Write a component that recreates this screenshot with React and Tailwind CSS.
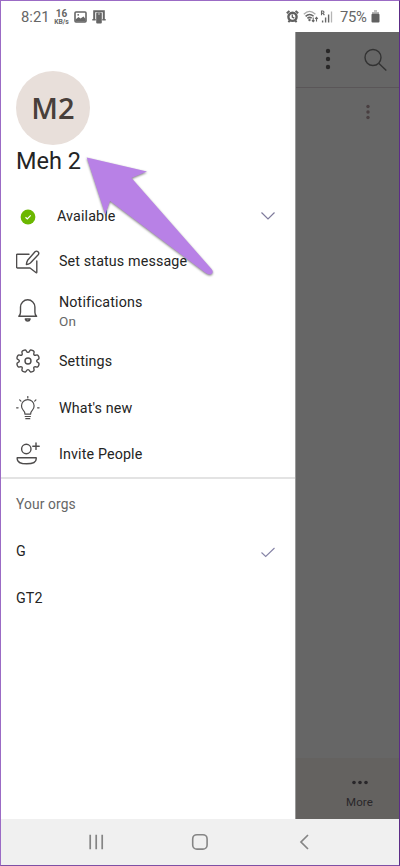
import React from "react";

// ---------- status bar icons ----------
const StatusBar = () => (
  <div className="flex h-[31px] shrink-0 items-center pl-5 pr-[19px] text-[#666]">
    <span className="w-[27px] text-[14.8px] leading-none mt-[2px]">8:21</span>
    <div className="ml-[5px] flex w-[17px] flex-col items-center">
      <span className="text-[10px] leading-[10px] font-bold">16</span>
      <span className="text-[6.8px] leading-[6px] font-bold">KB/s</span>
    </div>
    <svg className="ml-[4px]" width="13" height="12" viewBox="0 0 13 12">
      <rect x="1" y="1" width="11" height="10" rx="1" fill="none" stroke="#666" strokeWidth="1.6" />
      <path d="M1.500 10.500V8.500l3-2.500 2 1.600L9.500 5.500l2 2.500v2.500z" fill="#666" />
      <circle cx="4.200" cy="3.800" r="0.9" fill="#666" />
    </svg>
    <svg className="ml-[5px] mt-[1px]" width="14" height="14" viewBox="0 0 14 14">
      <path d="M2.200 9.500V1.200h9.600v8.300" fill="none" stroke="#666" strokeWidth="2" />
      <path d="M0.300 9.800h3.400M10.300 9.800h3.400" stroke="#666" strokeWidth="1.400" />
      <rect x="4.200" y="2.600" width="5.600" height="11" rx="1" fill="#666" />
      <path d="M6 4h2" stroke="#ddd" strokeWidth="0.800" />
    </svg>

    {/* right side */}
    <svg className="ml-auto" width="13" height="13" viewBox="0 0 13 13">
      <circle cx="6.500" cy="6.800" r="4.100" fill="none" stroke="#606060" strokeWidth="2.400" />
      <path d="M0.800 3.200L3.400 0.900M12.200 3.200L9.600 0.900M2.400 12.200l1.500-1.900M10.600 12.200l-1.500-1.900" stroke="#606060" strokeWidth="1.900" />
      <path d="M6.300 4.400v2.800l2 1" fill="none" stroke="#606060" strokeWidth="1.300" />
    </svg>
    <svg className="ml-[4px]" width="16" height="13" viewBox="0 0 16 13">
      <path d="M0.800 4.200Q6.500-1.400 12.400 4.200" fill="none" stroke="#aaa" strokeWidth="1.200" />
      <path d="M2.600 6.400Q6.500 2.600 10.600 6.200M4.400 8.400Q6.500 6.400 8.700 8.200" fill="none" stroke="#666" strokeWidth="1.500" />
      <circle cx="6.500" cy="10" r="1.200" fill="#666" />
      <path d="M10.200 7.600v4M8.900 10.300l1.300 1.400 1.300-1.400M13.500 11.500v-4M12.200 8.800l1.300-1.400 1.300 1.400" fill="none" stroke="#666" strokeWidth="1.100" />
    </svg>
    <svg className="ml-[1px]" width="13" height="13" viewBox="0 0 13 13">
      <path d="M1.500 5.200V1h1.300a1 1 0 0 1 0 2.300H1.500M3 3.300l1.400 1.900" fill="none" stroke="#666" strokeWidth="1.100" />
      <path d="M2.600 12.500v-1.900M5.600 12.500V7.600M8.600 12.500V4.600" stroke="#666" strokeWidth="1.400" />
      <path d="M11.500 12.500V1.500" stroke="#b5b5b5" strokeWidth="1.300" />
    </svg>
    <span className="ml-[7px] mt-[2px] w-[28px] text-[14.800px] leading-none tracking-[-0.300px]">75%</span>
    <svg className="ml-[3px]" width="9" height="13" viewBox="0 0 9 13">
      <path d="M3 1h3" stroke="#b5b5b5" strokeWidth="1.600" />
      <path d="M1 2h7v3H1z" fill="#b5b5b5" />
      <rect x="0.500" y="3.800" width="8" height="8.700" rx="1" fill="#606060" />
    </svg>
  </div>
);

// ---------- drawer icons ----------
const iconProps = {
  width: 24,
  height: 24,
  viewBox: "0 0 24 24",
  fill: "none",
  stroke: "#4e4c4c",
  strokeWidth: 1.4,
  strokeLinecap: "round",
  strokeLinejoin: "round",
};

const StatusIcon = () => (
  <svg {...iconProps}>
    <path d="M13 4.200H1.400q-.8 0-.8.800v12.200q0 .8.8.8H14l6.200 4.700q.6.300.6-.6V11" />
    <path d="M19 1.800a2.200 2.200 0 0 1 3.200 3L14.400 13q-2 1.500-4 1.500 0-2.200 1.200-4.200z" />
  </svg>
);

const BellIcon = () => (
  <svg {...iconProps} className="-mt-[3px]">
    <path d="M2.800 18.300q1.700-1.400 1.700-4V9a7.200 7.200 0 0 1 14.400 0v5.300q0 2.600 1.700 4z" />
    <path d="M9.300 21q.5 2 2.400 2t2.400-2z" />
  </svg>
);

// eight-toothed outline, corners rounded by curving through the midpoints
const gearPoints = [];
for (let i = 0; i < 8; i++) {
  [[-7, 8.7], [7, 8.7], [11, 11.8], [34, 11.8]].forEach(([deg, r]) => {
    const a = ((i * 45 + deg) * Math.PI) / 180;
    gearPoints.push([12 + r * Math.sin(a), 12 - r * Math.cos(a)]);
  });
}
const gearPath =
  gearPoints
    .map(([x, y], i) => {
      const [nx, ny] = gearPoints[(i + 1) % gearPoints.length];
      const mid = `${((x + nx) / 2).toFixed(2)} ${((y + ny) / 2).toFixed(2)}`;
      return i === 0 ? `M${mid}` : `Q${x.toFixed(2)} ${y.toFixed(2)} ${mid}`;
    })
    .join("") +
  `Q${gearPoints[0][0].toFixed(2)} ${gearPoints[0][1].toFixed(2)} 12 ${((gearPoints[0][1] + gearPoints[1][1]) / 2).toFixed(2)}Z`;

const GearIcon = () => (
  <svg {...iconProps} className="-mt-px">
    <path d={gearPath} />
    <circle cx="12" cy="12" r="3" />
  </svg>
);

const BulbIcon = () => (
  <svg {...iconProps} strokeWidth={1.2} className="-mt-px">
    <path d="M9 18.200q0-2.200-1.800-4A6.300 6.300 0 1 1 16.400 14.200Q14.600 16 14.600 18.200z" />
    <path d="M9.200 20.500h5.200M9.800 22.700h4" />
    <path d="M11.800.5v1.500M3.700 3.900l1.200 1.200M19.900 3.900l-1.200 1.200M.6 11.800h1.500M21.600 11.800h1.500" />
  </svg>
);

const InviteIcon = () => (
  <svg {...iconProps} className="-mt-px">
    <circle cx="10.300" cy="7" r="4.700" />
    <path d="M1.200 15.800h19v1.200c0 3-4 4.800-9.500 4.800S1.200 20 1.200 17z" />
    <path d="M20 1v6.400M16.800 4.200h6.400" />
  </svg>
);

const MenuRow = ({ icon, label, sub, height }) => (
  <div className={`flex items-center pl-[15px] ${height}`}>
    {icon}
    <div className="ml-[19px] flex flex-col">
      <span className="leading-[19px]">{label}</span>
      {sub && <span className="text-[13.500px] leading-[19px] text-[#666]">{sub}</span>}
    </div>
  </div>
);

const Drawer = () => (
  <div className="relative flex w-[295px] shrink-0 flex-col border-r border-[#999] bg-white text-[14.300px] tracking-[0.130px] text-[#242424]">
    <div className="ml-[15px] mt-[39px] flex size-[74px] items-center justify-center rounded-full bg-[#e8dfda] pb-px font-['Open_Sans',sans-serif] text-[29px] font-semibold tracking-normal text-[#483f3b]">
      M2
    </div>
    <div className="ml-[15px] h-8 text-[23.500px] leading-8 tracking-normal">Meh 2</div>

    {/* presence */}
    <div className="mt-4 flex h-[46px] items-center pl-[19px] pr-[19px]">
      <svg width="16" height="16" viewBox="0 0 16 16" className="mt-px">
        <circle cx="8" cy="8" r="7.400" fill="#6bb700" />
        <path d="M5.500 8.300l1.800 1.700 3.400-3.600" fill="none" stroke="#fff" strokeWidth="1.200" />
      </svg>
      <span className="ml-[21px] pt-[2px]">Available</span>
      <svg className="ml-auto" width="16" height="10" viewBox="0 0 16 10">
        <path d="M1.500 1.500L8 8l6.500-6.500" fill="none" stroke="#7f7b9c" strokeWidth="1.200" />
      </svg>
    </div>

    <MenuRow height="h-[45px]" icon={<StatusIcon />} label="Set status message" />
    <MenuRow height="h-[53px] pt-[2px]" icon={<BellIcon />} label="Notifications" sub="On" />
    <MenuRow height="h-[47px] pt-px" icon={<GearIcon />} label="Settings" />
    <MenuRow height="h-[47px] pt-px" icon={<BulbIcon />} label="What's new" />
    <MenuRow height="h-[46px] pt-px" icon={<InviteIcon />} label="Invite People" />
    <div className="h-[2px] bg-[#e3e3e3]" />

    {/* orgs */}
    <div className="flex h-[49px] items-center pl-[15px] pt-[2px] text-[13.800px] text-[#666]">Your orgs</div>
    <div className="flex h-[47px] items-center justify-between pl-[15px] pr-[19px]">
      <span>G</span>
      <svg width="16" height="12" viewBox="0 0 16 12">
        <path d="M1.500 6.500l4.200 4L14.500 2" fill="none" stroke="#8583a6" strokeWidth="1.100" />
      </svg>
    </div>
    <div className="flex h-[46px] items-center pl-[15px] pt-[2px]">GT2</div>

    {/* pointer arrow */}
    <svg className="absolute left-[80px] top-[120px]" width="140" height="132" viewBox="81 152 140 132">
      <path
        d="M86.700 157.500L147 171.500 131.500 178 211.500 269Q214 272 211.500 274 209 275.500 205 272.500L110 201 105.300 214.500Z"
        fill="#b881e6"
        className="drop-shadow-[0.500px_1px_1px_rgba(0,0,0,0.500)]"
      />
    </svg>
  </div>
);

// content behind the drawer, dimmed by the scrim
const DimmedPage = () => (
  <div className="flex flex-1 flex-col bg-[#666]">
    <div className="flex h-[56px] items-center border-b border-[#5a5658] pb-px pl-[27px]">
      <svg width="10" height="24" viewBox="0 0 10 24" fill="#292828">
        <circle cx="5" cy="4" r="2.200" />
        <circle cx="5" cy="12" r="2.200" />
        <circle cx="5" cy="20" r="2.200" />
      </svg>
      <svg className="ml-[31px] mt-[2px]" width="24" height="24" viewBox="0 0 24 24" fill="none" stroke="#333" strokeWidth="1.400">
        <circle cx="9" cy="9.500" r="8" />
        <path d="M14.700 15.200l7.600 7.400" />
      </svg>
    </div>
    <svg className="ml-[68px] mt-[16px]" width="8" height="16" viewBox="0 0 8 16" fill="#493f41">
      <circle cx="4" cy="2.500" r="1.700" />
      <circle cx="4" cy="8" r="1.700" />
      <circle cx="4" cy="13.500" r="1.700" />
    </svg>
    <div className="mt-auto flex h-[61px] flex-col items-center bg-[#646260] pl-6 text-[11.500px] text-[#29272a]">
      <svg className="mt-[22px]" width="18" height="5" viewBox="0 0 18 5">
        <circle cx="3" cy="2.500" r="1.800" fill="#29272a" />
        <circle cx="9" cy="2.500" r="1.800" fill="#29272a" />
        <circle cx="15" cy="2.500" r="1.800" fill="#29272a" />
      </svg>
      <span className="mt-[9px] leading-4 tracking-[0.100px]">More</span>
    </div>
  </div>
);

const NavBar = () => (
  <div className="flex h-[46px] shrink-0 items-center bg-[#f0f0f0] pl-[87px]">
    <svg width="16" height="16" viewBox="0 0 16 16" stroke="#858585" strokeWidth="1.700">
      <path d="M2.200.7v14.600M8.200.7v14.600M14.200.7v14.600" />
    </svg>
    <svg className="ml-[87px]" width="18" height="18" viewBox="0 0 18 18" fill="none" stroke="#858585" strokeWidth="1.600">
      <rect x="1.700" y="1.700" width="14.400" height="14.400" rx="4.200" />
    </svg>
    <svg className="ml-[90px]" width="12" height="16" viewBox="0 0 12 16" fill="none" stroke="#858585" strokeWidth="1.700">
      <path d="M9 1L2 8l7 7" />
    </svg>
  </div>
);

export default function App() {
  return (
    <div className="flex h-[866px] w-[400px] flex-col overflow-hidden border border-b-[#7f4fa5] border-l-[#9b6bc5] border-r-[#5c2b86] border-t-[#9b6bc5] bg-white font-[Roboto,sans-serif]">
      <StatusBar />
      <div className="flex min-h-0 flex-1">
        <Drawer />
        <DimmedPage />
      </div>
      <NavBar />
    </div>
  );
}
